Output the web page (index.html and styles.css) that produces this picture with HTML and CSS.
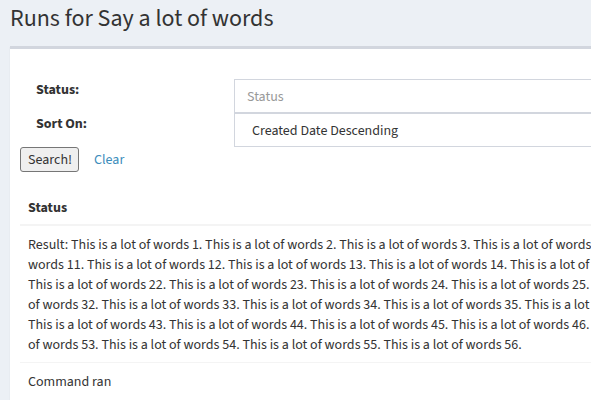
FILE: index.html
```html
<!DOCTYPE html>
<html lang="en">
<head>
<meta charset="utf-8">
<title>Runs for Say a lot of words</title>
<link rel="stylesheet" href="styles.css">
</head>
<body>
<div class="page">
  <header class="content-header">
    <h1>Runs for Say a lot of words</h1>
  </header>
  <section class="content">
    <div class="box">
      <div class="box-body">
        <form class="search-form">
          <div class="field-row">
            <label class="field-label" for="status">Status:</label>
            <input class="form-control" id="status" type="text" placeholder="Status">
          </div>
          <div class="field-row">
            <label class="field-label" for="sort">Sort On:</label>
            <select class="form-control form-select" id="sort">
              <option>Created Date Descending</option>
            </select>
          </div>
          <div class="actions">
            <button type="button" class="btn">Search!</button>
            <a class="link" href="#">Clear</a>
          </div>
        </form>
        <table class="runs">
          <thead>
            <tr><th>Status</th></tr>
          </thead>
          <tbody>
            <tr><td class="result">Result: This is a lot of words 1. This is a lot of words 2. This is a lot of words 3. This is a lot of words 4. This is a lot of words 5. This is a lot of words 6. This is a lot of words 7. This is a lot of words 8. This is a lot of words 9. This is a lot of words 10. This is a lot of words 11. This is a lot of words 12. This is a lot of words 13. This is a lot of words 14. This is a lot of words 15. This is a lot of words 16. This is a lot of words 17. This is a lot of words 18. This is a lot of words 19. This is a lot of words 20. This is a lot of words 21. This is a lot of words 22. This is a lot of words 23. This is a lot of words 24. This is a lot of words 25. This is a lot of words 26. This is a lot of words 27. This is a lot of words 28. This is a lot of words 29. This is a lot of words 30. This is a lot of words 31. This is a lot of words 32. This is a lot of words 33. This is a lot of words 34. This is a lot of words 35. This is a lot of words 36. This is a lot of words 37. This is a lot of words 38. This is a lot of words 39. This is a lot of words 40. This is a lot of words 41. This is a lot of words 42. This is a lot of words 43. This is a lot of words 44. This is a lot of words 45. This is a lot of words 46. This is a lot of words 47. This is a lot of words 48. This is a lot of words 49. This is a lot of words 50. This is a lot of words 51. This is a lot of words 52. This is a lot of words 53. This is a lot of words 54. This is a lot of words 55. This is a lot of words 56.</td></tr>
            <tr><td>Command ran</td></tr>
          </tbody>
        </table>
      </div>
    </div>
  </section>
</div>
</body>
</html>
```
FILE: styles.css
```css
html, body {
  margin: 0;
  padding: 0;
  overflow: hidden;
  background: #ecf0f5;
}

body {
  font-family: "Source Sans 3", "Lato", "Liberation Sans", sans-serif;
  font-size: 14px;
  line-height: 20px;
  color: #333;
}

.page {
  width: 1543px;
}

.content-header {
  padding: 6px 10px 0 10px;
}

.content-header h1 {
  margin: 0;
  font-size: 24px;
  line-height: 26px;
  font-weight: 400;
  color: #333;
}

.content {
  padding: 14px 10px 10px 10px;
}

.box {
  background: #fff;
  border-top: 3px solid #d2d6de;
  box-shadow: 0 1px 1px rgba(0, 0, 0, 0.1);
}

.box-body {
  padding: 10px;
}

.search-form {
  padding-top: 20px;
}

.field-row {
  display: grid;
  grid-template-columns: 214px 1fr;
  height: 34px;
}

.field-label {
  padding: 1px 0 0 16px;
  font-weight: 700;
}

.form-control {
  box-sizing: border-box;
  height: 34px;
  width: 100%;
  margin: 0;
  border: 1px solid #d2d6de;
  border-radius: 0;
  background: #fff;
  font-family: inherit;
  font-size: 14px;
  line-height: 20px;
  color: #555;
  padding: 7px 12px 5px 12px;
  outline: none;
}

.form-control::placeholder {
  color: #999;
  opacity: 1;
}

.form-select {
  appearance: none;
  -webkit-appearance: none;
  padding-left: 17px;
  color: #333;
}

.actions {
  display: flex;
  align-items: center;
  gap: 15px;
  height: 25px;
  margin-bottom: 17px;
}

.btn {
  box-sizing: border-box;
  height: 25px;
  padding: 1px 6px 0 7px;
  margin: 0;
  font-family: inherit;
  font-size: 14px;
  line-height: 20px;
  color: #333;
  background: #efefef;
  border: 1px solid #767676;
  border-radius: 3px;
}

.link {
  padding-top: 1px;
  color: #3c8dbc;
  text-decoration: none;
}

.runs {
  width: 1503px;
  border-collapse: collapse;
  border-spacing: 0;
}

.runs th {
  text-align: left;
  font-weight: 700;
  padding: 9px 8px 6px 8px;
  border-bottom: 2px solid #f4f4f4;
}

.runs td {
  padding: 9px 8px 7px 8px;
  vertical-align: top;
}

.runs tbody tr + tr td {
  border-top: 1px solid #f4f4f4;
}
```
